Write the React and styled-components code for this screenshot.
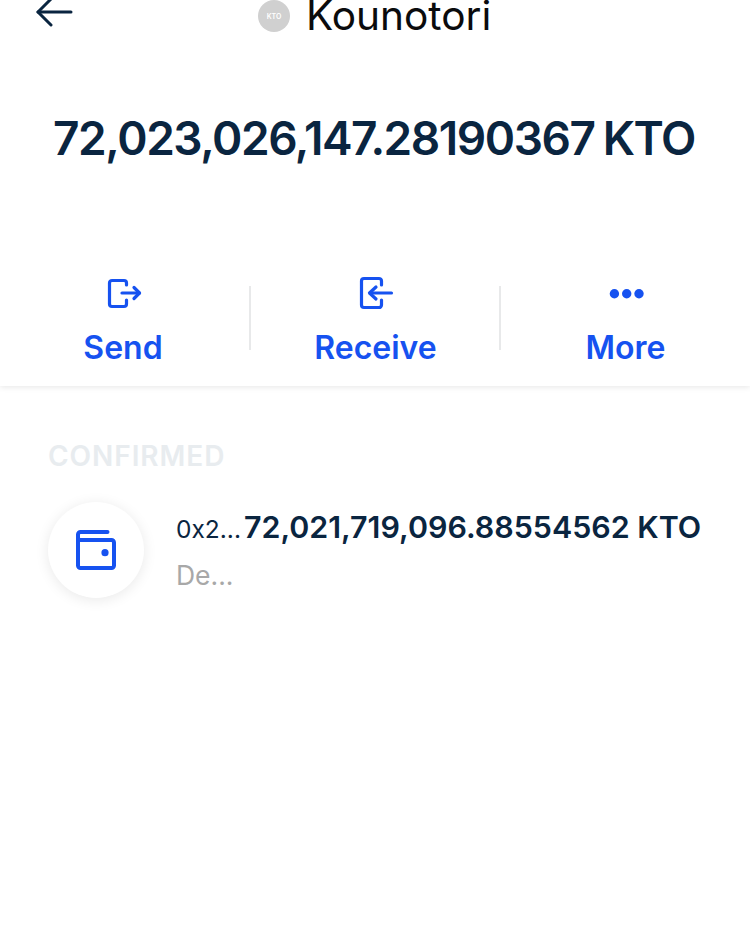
import styled, { createGlobalStyle } from "styled-components"

const GlobalStyle = createGlobalStyle`
    html, body {
        margin: 0;
        padding: 0;
        background: #fff;
        font-family: Inter, "Liberation Sans", sans-serif;
    }
`

const Page = styled.div`
    width: 750px;
    height: 925px;
    overflow: hidden;
    background: #fff;
`

const TopPanel = styled.section`
    height: 386px;
    background: #fff;
    box-shadow: 0 1px 6px rgba(10, 11, 13, 0.1);
    display: flex;
    flex-direction: column;
`

const Header = styled.header`
    height: 32px;
    padding-left: 36px;
    display: flex;
    align-items: center;
`

const BackIcon = styled.svg`
    width: 37px;
    height: 30px;
    align-self: flex-start;
    margin-top: -3px;
    flex: none;
    overflow: visible;
`

const TitleGroup = styled.div`
    margin-left: 185px;
    display: flex;
    align-items: center;
    gap: 16px;
`

const TokenBadge = styled.div`
    width: 32px;
    height: 32px;
    border-radius: 50%;
    background: #d0d0d0;
    color: #fff;
    font-size: 7px;
    font-weight: 600;
    display: flex;
    align-items: center;
    justify-content: center;
`

const Title = styled.h1`
    margin: 0;
    font-size: 40.6px;
    line-height: 32px;
    font-weight: 400;
    color: #0a0b0d;
`

const Balance = styled.div`
    margin-top: 76px;
    padding-right: 2px;
    text-align: center;
    font-size: 46px;
    line-height: 60px;
    font-weight: 600;
    letter-spacing: -1.45px;
    word-spacing: -2px;
    color: #0a2540;
    white-space: nowrap;
`

const Actions = styled.nav`
    margin-top: 118px;
    display: grid;
    grid-template-columns: repeat(3, 1fr);
`

const Action = styled.div`
    height: 64px;
    margin-left: ${p => (p.$divider ? "-1px" : "0")};
    border-left: ${p => (p.$divider ? "2px solid #e8e9ea" : "0")};
    color: #1652f0;
    display: flex;
    flex-direction: column;
    align-items: center;
`

const ActionIcon = styled.svg`
    width: 36px;
    height: 36px;
    margin-top: -11px;
    flex: none;
`

const ActionLabel = styled.span`
    margin-top: 19px;
    margin-right: ${p => p.$nudge || 0}px;
    font-size: 32px;
    line-height: 36px;
    font-weight: 600;
`

const Activity = styled.section`
    padding: 54px 48px 0;
`

const SectionLabel = styled.h2`
    margin: 0;
    font-size: 28px;
    line-height: 32px;
    font-weight: 600;
    letter-spacing: 0.95px;
    color: #e8ecef;
`

const Row = styled.div`
    margin-top: 30px;
    display: flex;
    align-items: center;
    gap: 32px;
`

const IconCircle = styled.div`
    width: 96px;
    height: 96px;
    flex: none;
    border-radius: 50%;
    background: #fff;
    box-shadow: 0 2px 14px rgba(10, 11, 13, 0.09);
    display: flex;
    align-items: center;
    justify-content: center;
`

const RowText = styled.div`
    padding-bottom: 2px;
    display: flex;
    flex-direction: column;
    gap: 12px;
`

const RowTop = styled.div`
    display: flex;
    align-items: center;
    gap: 3px;
    white-space: nowrap;
`

const Address = styled.span`
    font-size: 24.5px;
    line-height: 36px;
    padding-top: 3px;
    color: #0a2540;
`

const Amount = styled.span`
    font-size: 30.4px;
    line-height: 36px;
    font-weight: 600;
    color: #0a2540;
`

const Status = styled.span`
    font-size: 26.5px;
    line-height: 32px;
    color: #a8a8a8;
`

const App = () => {
    return (
        <Page>
            <GlobalStyle />
            <TopPanel>
                <Header>
                    <BackIcon viewBox="0 0 37 30" fill="none" stroke="#0a2540" strokeWidth="3" strokeLinecap="round" strokeLinejoin="round">
                        <path d="M2 15h33" />
                        <path d="M15 2 2 15l13 13" />
                    </BackIcon>
                    <TitleGroup>
                        <TokenBadge>KTO</TokenBadge>
                        <Title>Kounotori</Title>
                    </TitleGroup>
                </Header>
                <Balance>72,023,026,147.28190367 KTO</Balance>
                <Actions>
                    <Action>
                        <ActionIcon viewBox="0 0 36 36" fill="none" stroke="currentColor" strokeWidth="3.2" strokeLinecap="round" strokeLinejoin="round">
                            <path d="M19.5 10V8A2.5 2.5 0 0 0 17 5.5H5A2.5 2.5 0 0 0 2.5 8v21A2.5 2.5 0 0 0 5 31.5h12a2.5 2.5 0 0 0 2.5-2.5v-4" />
                            <path d="M15 18h17.5" />
                            <path d="m27 12.5 5.5 5.5-5.5 5.5" />
                        </ActionIcon>
                        <ActionLabel $nudge={4}>Send</ActionLabel>
                    </Action>
                    <Action $divider>
                        <ActionIcon viewBox="0 0 36 36" fill="none" stroke="currentColor" strokeWidth="3.2" strokeLinecap="round" strokeLinejoin="round">
                            <path d="M23.5 10V6A2.5 2.5 0 0 0 21 3.5H6A2.5 2.5 0 0 0 3.5 6v24A2.5 2.5 0 0 0 6 32.5h15a2.5 2.5 0 0 0 2.5-2.5v-5" />
                            <path d="M12 18h21.5" />
                            <path d="m18 12-6.5 6 6.5 6" />
                        </ActionIcon>
                        <ActionLabel>Receive</ActionLabel>
                    </Action>
                    <Action $divider>
                        <ActionIcon viewBox="0 0 36 36" fill="currentColor">
                            <circle cx="6.4" cy="18.7" r="4.7" />
                            <circle cx="18.7" cy="18.7" r="4.7" />
                            <circle cx="31" cy="18.7" r="4.7" />
                        </ActionIcon>
                        <ActionLabel>More</ActionLabel>
                    </Action>
                </Actions>
            </TopPanel>
            <Activity>
                <SectionLabel>CONFIRMED</SectionLabel>
                <Row>
                    <IconCircle>
                        <svg width="40" height="40" viewBox="0 0 40 40" fill="none" stroke="#1652f0" strokeWidth="4" strokeLinecap="round" strokeLinejoin="round">
                            <path d="M2 7v28.5A2.5 2.5 0 0 0 4.5 38h31a2.5 2.5 0 0 0 2.5-2.500V12.500A2.500 2.500 0 0 0 35.500 10H4.500A2.500 2.500 0 0 1 2 7V4.500A2.500 2.500 0 0 1 4.500 2h27" />
                            <circle cx="29" cy="22.7" r="3.6" fill="#1652f0" stroke="none" />
                        </svg>
                    </IconCircle>
                    <RowText>
                        <RowTop>
                            <Address>0x2...</Address>
                            <Amount>72,021,719,096.88554562 KTO</Amount>
                        </RowTop>
                        <Status>De...</Status>
                    </RowText>
                </Row>
            </Activity>
        </Page>
    )
}

export default App
